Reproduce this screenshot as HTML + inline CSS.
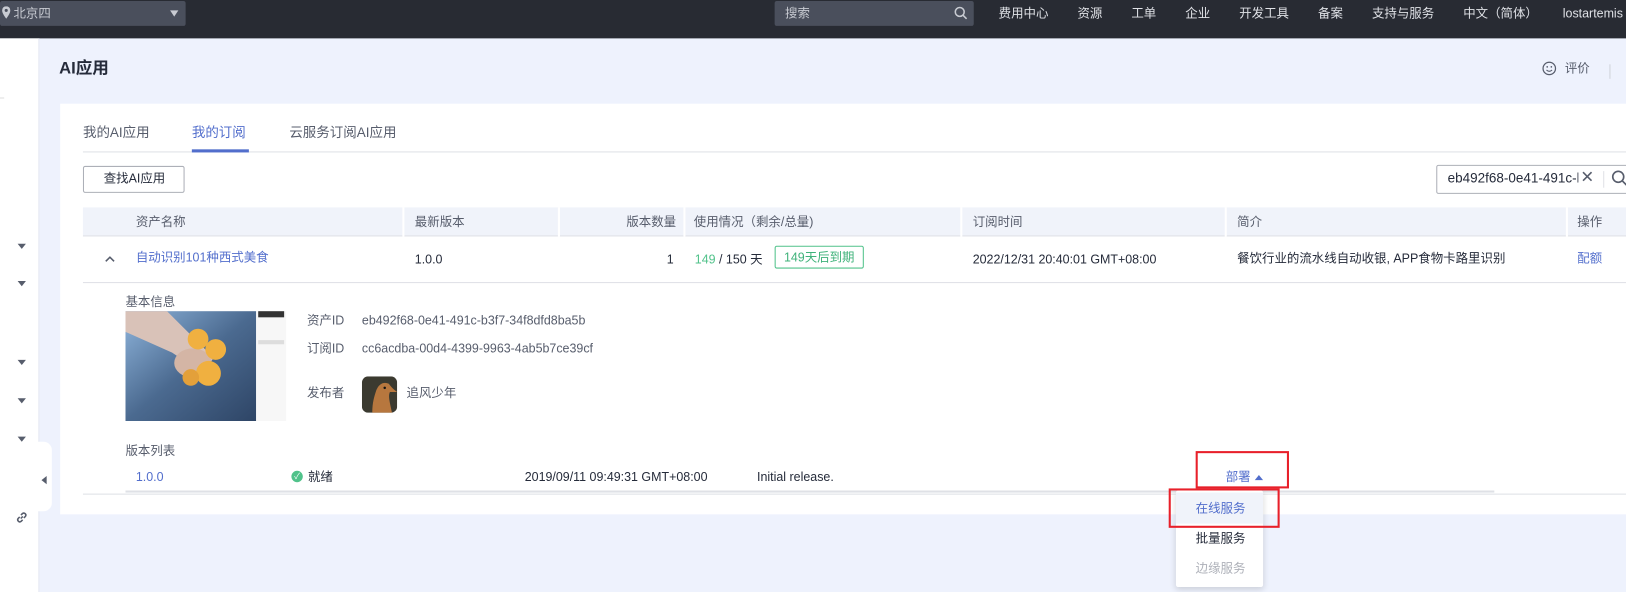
<!DOCTYPE html>
<html><head><meta charset="utf-8"><style>
*{margin:0;padding:0;box-sizing:border-box}
body{width:1626px;height:592px;overflow:hidden;background:#eef2fd;font-family:"Liberation Sans","Noto Sans CJK SC",sans-serif;font-size:12px;line-height:1.3;color:#252b3a;position:relative}
#w{position:absolute;left:0;top:0;width:1568px;height:571px;transform:scale(1.037);transform-origin:0 0;overflow:hidden}
.a{position:absolute;white-space:nowrap}
.top{left:0;top:0;width:1568px;height:37px;background:#282b33}
.nav{color:#dfe1e6;font-size:12px;top:11px}
.hd{color:#575d6c;top:207px}
.th{top:200px;height:28px;background:#f0f3fa}
.dv{top:200px;width:2px;height:28px;background:#fff}
.tri{width:0;height:0;border-left:4px solid transparent;border-right:4px solid transparent;border-top:5px solid #575d6c;left:17px}
</style></head><body><div id="w">
<div class="a top"></div>
<div class="a" style="left:0;top:1px;width:179px;height:24px;background:#4a4f5c;border-radius:2px"></div>
<svg class="a" style="left:2px;top:6px" width="8" height="12" viewBox="0 0 8 12"><path d="M4 0a4 4 0 0 1 4 4c0 3-4 8-4 8S0 7 0 4a4 4 0 0 1 4-4z" fill="#c8cbd2"/><circle cx="4" cy="4" r="1.5" fill="#4a4f5c"/></svg>
<div class="a nav" style="left:13px;top:6px;color:#c8cbd2">北京四</div>
<div class="a" style="left:164px;top:10px;border-left:4px solid transparent;border-right:4px solid transparent;border-top:6px solid #c8cbd2"></div>
<div class="a" style="left:747px;top:1px;width:192px;height:24px;background:#4a4f5c;border-radius:2px"></div>
<div class="a nav" style="left:757px;top:6px;color:#c8cbd2">搜索</div>
<svg class="a" style="left:920px;top:6px" width="13" height="13" viewBox="0 0 13 13"><circle cx="5.5" cy="5.5" r="4.3" stroke="#c8cbd2" stroke-width="1.5" fill="none"/><path d="M8.6 8.6l3.5 3.5" stroke="#c8cbd2" stroke-width="1.5"/></svg>
<div class="a nav" style="left:963px;top:6px">费用中心</div>
<div class="a nav" style="left:1039px;top:6px">资源</div>
<div class="a nav" style="left:1091px;top:6px">工单</div>
<div class="a nav" style="left:1143px;top:6px">企业</div>
<div class="a nav" style="left:1195px;top:6px">开发工具</div>
<div class="a nav" style="left:1271px;top:6px">备案</div>
<div class="a nav" style="left:1323px;top:6px">支持与服务</div>
<div class="a nav" style="left:1411px;top:6px">中文（简体）</div>
<div class="a nav" style="left:1507px;top:6px">lostartemis</div>

<div class="a" style="left:0;top:37px;width:38px;height:555px;background:#fff;border-right:1px solid #e3e7f2"></div>
<div class="a" style="left:0;top:94px;width:4px;height:1px;background:#ddd"></div>
<div class="a tri" style="top:235px"></div>
<div class="a tri" style="top:271px"></div>
<div class="a tri" style="top:347px"></div>
<div class="a tri" style="top:384px"></div>
<div class="a tri" style="top:421px"></div>
<div class="a" style="left:36px;top:426px;width:14px;height:67px;background:#fff;border-radius:0 8px 8px 0"></div>
<div class="a" style="left:40px;top:459px;border-top:4px solid transparent;border-bottom:4px solid transparent;border-right:5px solid #575d6c"></div>
<svg class="a" style="left:15px;top:493px" width="12" height="12" viewBox="0 0 12 12"><path d="M5 7l2-2M4 5.5L2.5 7a2 2 0 0 0 2.8 2.8L6.8 8.3M8 6.5l1.5-1.5a2 2 0 0 0-2.8-2.8L5.2 3.7" stroke="#575d6c" stroke-width="1.5" fill="none"/></svg>

<div class="a" style="left:57px;top:57px;font-size:16px;font-weight:bold;color:#252b3a">AI应用</div>
<svg class="a" style="left:1487px;top:59px" width="14" height="14" viewBox="0 0 14 14"><circle cx="7" cy="7" r="6" stroke="#575d6c" fill="none" stroke-width="1.2"/><circle cx="5" cy="5.5" r=".8" fill="#575d6c"/><circle cx="9" cy="5.5" r=".8" fill="#575d6c"/><path d="M4.3 8.5q2.7 2.5 5.4 0" stroke="#575d6c" fill="none" stroke-width="1.1"/></svg>
<div class="a" style="left:1509px;top:59px;color:#575d6c">评价</div>
<div class="a" style="left:1552px;top:62px;width:1px;height:14px;background:#d0d3da"></div>

<div class="a" style="left:58px;top:100px;width:1568px;height:396px;background:#fff"></div>
<div class="a" style="left:80px;top:120px;font-size:13px;color:#575d6c">我的AI应用</div>
<div class="a" style="left:185px;top:120px;font-size:13px;color:#526ecc">我的订阅</div>
<div class="a" style="left:279px;top:120px;font-size:13px;color:#575d6c">云服务订阅AI应用</div>
<div class="a" style="left:80px;top:146px;width:1546px;height:1px;background:#dfe1e6"></div>
<div class="a" style="left:185px;top:144px;width:55px;height:3px;background:#526ecc"></div>
<div class="a" style="left:80px;top:160px;width:98px;height:26px;border:1px solid #adb0b8;border-radius:2px"></div>
<div class="a" style="left:100px;top:165px">查找AI应用</div>
<div class="a" style="left:1385px;top:159px;width:260px;height:28px;border:1px solid #adb0b8;border-radius:2px;background:#fff"></div>
<div class="a" style="left:1396px;top:164px;font-size:13px;width:126px;overflow:hidden">eb492f68-0e41-491c-b3f7</div>
<div class="a" style="left:1524px;top:162px;font-size:16px;line-height:1.2;color:#575d6c">✕</div>
<div class="a" style="left:1546px;top:165px;width:1px;height:16px;background:#dfe1e6"></div>
<svg class="a" style="left:1554px;top:164px" width="16" height="16" viewBox="0 0 16 16"><circle cx="6.5" cy="6.5" r="5.3" stroke="#575d6c" stroke-width="1.6" fill="none"/><path d="M10.5 10.5l4 4" stroke="#575d6c" stroke-width="1.6"/></svg>

<div class="a th" style="left:80px;width:1546px"></div>
<div class="a" style="left:80px;top:227px;width:1546px;height:1px;background:#dfe1e6"></div>
<div class="a dv" style="left:388px"></div><div class="a dv" style="left:538px"></div><div class="a dv" style="left:659px"></div><div class="a dv" style="left:926px"></div><div class="a dv" style="left:1181px"></div><div class="a dv" style="left:1510px"></div>
<div class="a hd" style="left:131px">资产名称</div>
<div class="a hd" style="left:400px">最新版本</div>
<div class="a hd" style="left:604px">版本数量</div>
<div class="a hd" style="left:669px">使用情况（剩余/总量)</div>
<div class="a hd" style="left:938px">订阅时间</div>
<div class="a hd" style="left:1193px">简介</div>
<div class="a hd" style="left:1521px">操作</div>

<svg class="a" style="left:101px;top:246px" width="10" height="7" viewBox="0 0 10 7"><path d="M1 6l4-4 4 4" stroke="#575d6c" stroke-width="1.5" fill="none"/></svg>
<div class="a" style="left:131px;top:241px;color:#526ecc">自动识别101种西式美食</div>
<div class="a" style="left:400px;top:243px">1.0.0</div>
<div class="a" style="left:643px;top:243px">1</div>
<div class="a" style="left:670px;top:243px"><span style="color:#50c28a">149</span> / 150 天</div>
<div class="a" style="left:747px;top:237px;width:86px;height:22px;border:1px solid #50c28a;border-radius:2px;color:#3fb27a;text-align:center;line-height:20px">149天后到期</div>
<div class="a" style="left:938px;top:243px">2022/12/31 20:40:01 GMT+08:00</div>
<div class="a" style="left:1193px;top:242px">餐饮行业的流水线自动收银, APP食物卡路里识别</div>
<div class="a" style="left:1521px;top:242px;color:#526ecc">配额</div>
<div class="a" style="left:80px;top:272px;width:1546px;height:1px;background:#dfe1e6"></div>

<div class="a" style="left:121px;top:284px;color:#575d6c">基本信息</div>
<svg class="a" style="left:121px;top:300px" width="155" height="106" viewBox="0 0 155 106"><defs><linearGradient id="g" x1="0" y1="0" x2="1" y2="1"><stop offset="0" stop-color="#8fb5dc"/><stop offset=".5" stop-color="#4b6a90"/><stop offset="1" stop-color="#2e4566"/></linearGradient></defs><rect width="126" height="106" fill="url(#g)"/><path d="M0 0h40l45 45l-10 15l-30-20L0 20z" fill="#d9c2b8"/><ellipse cx="65" cy="50" rx="18" ry="14" fill="#d4b5a5"/><circle cx="70" cy="27" r="10" fill="#f0b040"/><circle cx="87" cy="37" r="10" fill="#f0b040"/><circle cx="80" cy="60" r="12" fill="#f0b040"/><circle cx="63" cy="64" r="8" fill="#e3a03a"/><rect x="126" width="29" height="106" fill="#f7f7f7"/><rect x="128" y="0" width="25" height="6" fill="#333"/><rect x="128" y="28" width="25" height="4" fill="#ddd"/></svg>
<div class="a" style="left:296px;top:302px;color:#575d6c">资产ID</div>
<div class="a" style="left:349px;top:302px;color:#575d6c">eb492f68-0e41-491c-b3f7-34f8dfd8ba5b</div>
<div class="a" style="left:296px;top:329px;color:#575d6c">订阅ID</div>
<div class="a" style="left:349px;top:329px;color:#575d6c">cc6acdba-00d4-4399-9963-4ab5b7ce39cf</div>
<div class="a" style="left:296px;top:372px;color:#575d6c">发布者</div>
<svg class="a" style="left:349px;top:363px" width="34" height="35" viewBox="0 0 34 35"><rect width="34" height="35" rx="6" fill="#3b3a30"/><path d="M10 35c0-10 2-16 4-22q4-9 12-6c2 3 4 5 8 8h-7c-2 4 0 10 2 20z" fill="#b7773e"/><circle cx="22" cy="11" r="1.2" fill="#111"/></svg>
<div class="a" style="left:392px;top:372px;color:#575d6c">追风少年</div>

<div class="a" style="left:121px;top:428px;color:#575d6c">版本列表</div>
<div class="a" style="left:131px;top:453px;color:#526ecc">1.0.0</div>
<div class="a" style="left:281px;top:454px;width:11px;height:11px;border-radius:50%;background:#50c28a;color:#fff;font-size:8px;text-align:center;line-height:11px">✓</div>
<div class="a" style="left:297px;top:453px">就绪</div>
<div class="a" style="left:506px;top:453px">2019/09/11 09:49:31 GMT+08:00</div>
<div class="a" style="left:730px;top:453px">Initial release.</div>
<div class="a" style="left:1182px;top:453px;color:#526ecc">部署</div>
<div class="a" style="left:1210px;top:458px;border-left:4px solid transparent;border-right:4px solid transparent;border-bottom:5px solid #526ecc"></div>
<div class="a" style="left:121px;top:473px;width:1320px;height:2px;background:#dfe1e6"></div>
<div class="a" style="left:80px;top:476px;width:1546px;height:1px;background:#dfe1e6"></div>
<div class="a" style="left:1153px;top:435px;width:90px;height:36px;border:2px solid #e8202a"></div>

<div class="a" style="left:1134px;top:473px;width:84px;height:93px;background:#fff;border-radius:2px;box-shadow:0 2px 6px rgba(0,0,0,.15)"></div>
<div class="a" style="left:1134px;top:475px;width:84px;height:30px;background:#f0f3fa"></div>
<div class="a" style="left:1153px;top:483px;color:#526ecc">在线服务</div>
<div class="a" style="left:1153px;top:512px">批量服务</div>
<div class="a" style="left:1153px;top:541px;color:#adb0b8">边缘服务</div>
<div class="a" style="left:1127px;top:471px;width:107px;height:38px;border:2px solid #e8202a"></div>
</div></body></html>
